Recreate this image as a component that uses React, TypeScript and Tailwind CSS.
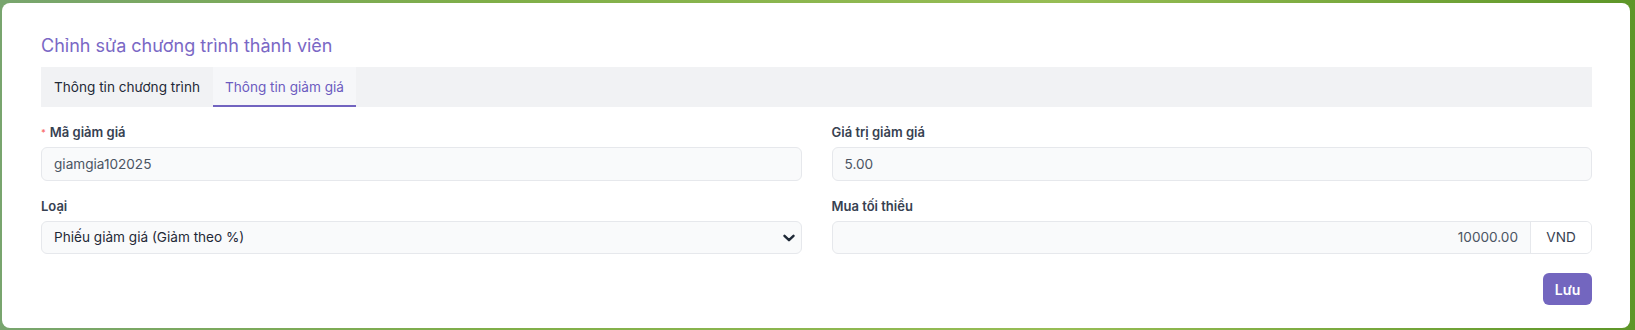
import React from "react";

function Chevron() {
  return (
    <svg width="12" height="8" viewBox="0 0 12 8" fill="none" className="shrink-0">
      <path d="M1.5 1.8 6 6.2l4.5-4.4" stroke="#1f2937" strokeWidth="2.4" strokeLinecap="round" strokeLinejoin="round" />
    </svg>
  );
}

function Label({ children, required }: { children: React.ReactNode; required?: boolean }) {
  return (
    <div className="flex items-center h-5 text-[13px] font-semibold text-[#374151] leading-5">
      {required && <span className="text-[#f87171] text-[9px] mr-[4px] leading-none">*</span>}
      {children}
    </div>
  );
}

export default function App() {
  return (
    <div
      className="w-[1635px] h-[330px] pt-[3px] pl-[2px] pr-[5px] pb-[2px] bg-[linear-gradient(90deg,#78a56e_0%,#7fae48_30%,#97bd55_65%,#5d9628_100%)]"
      style={{ fontFamily: "Inter, 'Noto Sans', sans-serif" }}
    >
      <div className="h-full bg-white rounded-[8px] pt-[29px] pl-[39px] pr-[38px] pb-[23px] flex flex-col">
        <h1 className="text-[18px] leading-7 font-normal text-[#7a68c5]">Chỉnh sửa chương trình thành viên</h1>
        <div className="mt-[7px] h-10 bg-[#f1f2f4] flex">
          <div className="px-[13px] flex items-center text-[13.6px] text-[#1f2937]">Thông tin chương trình</div>
          <div className="px-3 flex items-center text-[13.6px] text-[#6c5bc0] bg-[#f6f7f9] border-b-2 border-[#7264c0] pt-[2px]">
            Thông tin giảm giá
          </div>
        </div>
        <div className="grid grid-cols-2 gap-x-[30px] mt-[15px]">
          <div className="flex flex-col">
            <Label required>Mã giảm giá</Label>
            <div className="mt-[5px] h-[34px] rounded-[6px] border border-[#e6e8ec] bg-[#f9fafb] px-3 flex items-center text-[13.6px] text-[#4b5563]">
              giamgia102025
            </div>
          </div>
          <div className="flex flex-col">
            <Label>Giá trị giảm giá</Label>
            <div className="mt-[5px] h-[34px] rounded-[6px] border border-[#e6e8ec] bg-[#f9fafb] px-3 flex items-center text-[13.6px] text-[#4b5563]">
              5.00
            </div>
          </div>
          <div className="flex flex-col mt-[15px]">
            <Label>Loại</Label>
            <div className="mt-[5px] h-[33px] rounded-[6px] border border-[#e6e8ec] bg-[#f9fafb] pl-3 pr-[6px] flex items-center justify-between text-[13.6px] text-[#1f2937]">
              <span>Phiếu giảm giá (Giảm theo %)</span>
              <Chevron />
            </div>
          </div>
          <div className="flex flex-col mt-[15px]">
            <Label>Mua tối thiểu</Label>
            <div className="mt-[5px] h-[33px] rounded-[6px] border border-[#e6e8ec] bg-[#f9fafb] flex text-[13.6px] overflow-hidden">
              <div className="flex-1 flex items-center justify-end pr-3 text-[#4b5563]">10000.00</div>
              <div className="w-[61px] border-l border-[#e6e8ec] bg-white flex items-center justify-center text-[#374151]">VND</div>
            </div>
          </div>
        </div>
        <div className="flex justify-end mt-[19px]">
          <button className="h-8 w-[49px] rounded-[6px] bg-[#7366bf] text-white text-[14px] font-semibold flex items-center justify-center">
            Lưu
          </button>
        </div>
      </div>
    </div>
  );
}
